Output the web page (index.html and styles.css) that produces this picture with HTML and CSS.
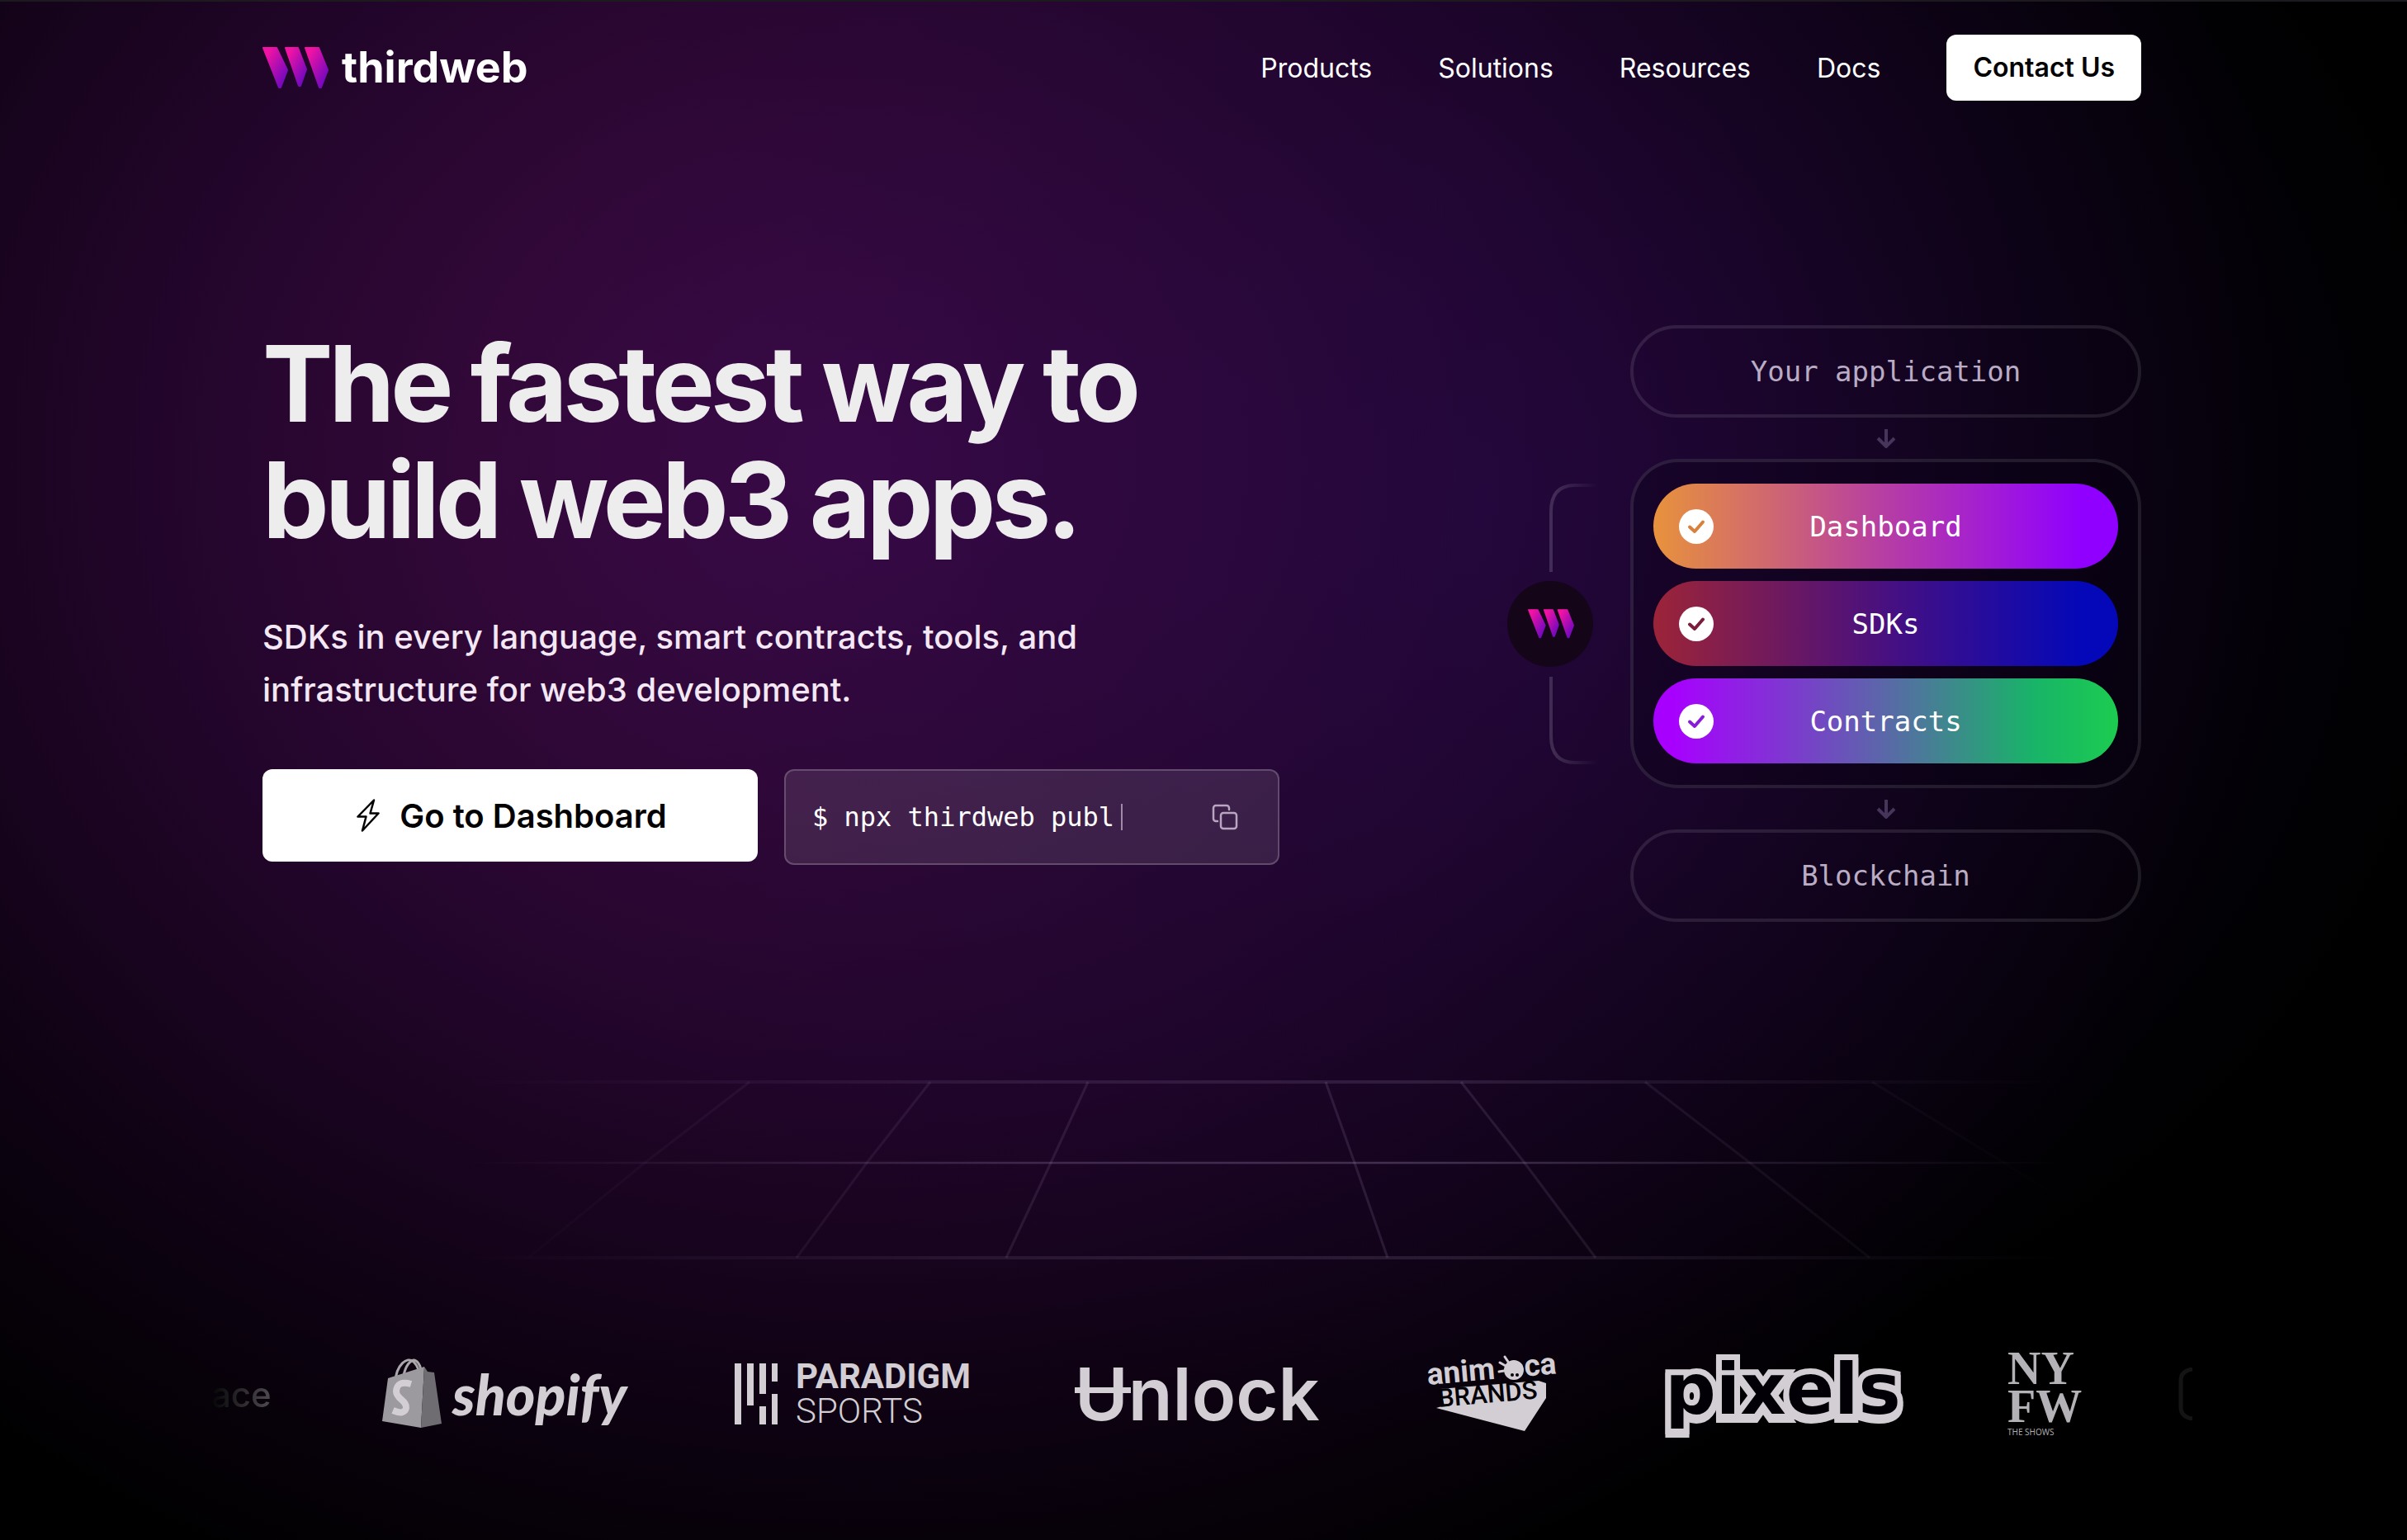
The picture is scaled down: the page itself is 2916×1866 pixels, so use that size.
FILE: index.html
```html
<!DOCTYPE html>
<html lang="en">
<head>
<meta charset="utf-8">
<title>thirdweb</title>
<link rel="stylesheet" href="styles.css">
</head>
<body>
<svg class="defs" aria-hidden="true">
  <defs>
    <linearGradient id="brand" x1="0" y1="0" x2="1" y2="1">
      <stop offset="0.15" stop-color="#f213a4"/>
      <stop offset="1" stop-color="#5a06c4"/>
    </linearGradient>
    <symbol id="mark" viewBox="0 0 80 51">
      <g fill="url(#brand)" stroke="url(#brand)" stroke-width="2" stroke-linejoin="round">
        <path d="M1 1H17L30 28L22 49H20Z"/>
        <path d="M28 1H43L53 27L46 47H44Z"/>
        <path d="M52 1H68L79 28L71 49H69Z"/>
      </g>
    </symbol>
    <symbol id="down" viewBox="0 0 24 24">
      <path d="M12 1V22M2 12L12 22L22 12" fill="none" stroke="currentColor" stroke-width="4"/>
    </symbol>
    <symbol id="check" viewBox="0 0 42 42">
      <circle cx="21" cy="21" r="21" fill="#fff"/>
      <path d="M13 21.500L19 27L29 15.500" fill="none" stroke="currentColor" stroke-width="4" stroke-linecap="round" stroke-linejoin="round"/>
    </symbol>
  </defs>
</svg>

<div class="page">
  <header class="header">
    <a class="brand" href="#">
      <svg class="brand-mark" aria-hidden="true"><use href="#mark"/></svg>
      <span>thirdweb</span>
    </a>
    <nav class="nav">
      <a href="#">Products</a>
      <a href="#">Solutions</a>
      <a href="#">Resources</a>
      <a href="#">Docs</a>
      <a class="contact" href="#">Contact Us</a>
    </nav>
  </header>

  <main>
    <section class="hero">
      <div class="pitch">
        <h1>The fastest way to<br>build web3 apps.</h1>
        <p>SDKs in every language, smart contracts, tools, and<br>infrastructure for web3 development.</p>
        <div class="actions">
          <a class="dashboard" href="#">
            <svg class="bolt" viewBox="0 0 28 40" aria-hidden="true"><path d="M21 1.500L1.500 21.500H11.500L7 38.500L26.500 17.500H16.500Z" fill="none" stroke="#000" stroke-width="2.500" stroke-linejoin="round"/></svg>
            Go to Dashboard
          </a>
          <div class="command">
            <code>$ npx thirdweb publ</code><span class="caret"></span>
            <button class="copy" type="button" aria-label="Copy command">
              <svg viewBox="0 0 32 32" aria-hidden="true"><g fill="none" stroke="currentColor" stroke-width="2.500" stroke-linejoin="round"><rect x="11" y="11" width="19" height="19" rx="3"/><path d="M7 21H5A3 3 0 0 1 2 18V5A3 3 0 0 1 5 2H18A3 3 0 0 1 21 5V7" stroke-linecap="round"/></g></svg>
            </button>
          </div>
        </div>
      </div>

      <div class="diagram">
        <svg class="bracket" viewBox="0 0 110 340" aria-hidden="true">
          <defs>
            <linearGradient id="fade" gradientUnits="userSpaceOnUse" x1="52" y1="0" x2="110" y2="0">
              <stop offset="0.1" stop-color="#fff" stop-opacity="0.15"/>
              <stop offset="1" stop-color="#fff" stop-opacity="0"/>
            </linearGradient>
          </defs>
          <path d="M53 107V34Q53 2 82 2H110M53 234V306Q53 338 82 338H110" fill="none" stroke="url(#fade)" stroke-width="4"/>
          <circle cx="52" cy="170" r="52" fill="#150518"/>
          <use href="#mark" x="25" y="152" width="56" height="36"/>
        </svg>
        <div class="stack">
          <div class="node">Your application</div>
          <svg class="down" aria-hidden="true"><use href="#down"/></svg>
          <ul class="layers">
            <li class="layer layer-dashboard"><svg aria-hidden="true"><use href="#check"/></svg>Dashboard</li>
            <li class="layer layer-sdks"><svg aria-hidden="true"><use href="#check"/></svg>SDKs</li>
            <li class="layer layer-contracts"><svg aria-hidden="true"><use href="#check"/></svg>Contracts</li>
          </ul>
          <svg class="down" aria-hidden="true"><use href="#down"/></svg>
          <div class="node">Blockchain</div>
        </div>
      </div>
    </section>

    <svg class="floor" viewBox="0 0 2916 220" aria-hidden="true">
      <defs>
        <linearGradient id="floor-line" gradientUnits="userSpaceOnUse" x1="560" y1="0" x2="2500" y2="0">
          <stop offset="0" stop-color="#b8a0d0" stop-opacity="0"/>
          <stop offset="0.35" stop-color="#b8a0d0" stop-opacity="0.12"/>
          <stop offset="0.6" stop-color="#b8a0d0" stop-opacity="0.15"/>
          <stop offset="1" stop-color="#b8a0d0" stop-opacity="0"/>
        </linearGradient>
      </defs>
      <g fill="none" stroke="url(#floor-line)" stroke-width="3">
        <path d="M540 4L2520 4.010M540 217L2520 217.010" stroke-width="4"/>
        <path d="M540 102L2520 102.010" stroke-width="3"/>
        <path d="M540 102L2520 102.010" stroke-width="2"/>
        <path d="M908 4L781 102L640 217M1127 4L1050 102L965 217M1318 4L1273 102L1219 217M1606 4L1641 102L1681 217M1770 4L1847 102L1933 217M1993 4L2120 102L2265 217M2268 4L2428 102L2520 160"/>
      </g>
    </svg>

    <section class="partners" aria-label="Partners">
      <span class="partner partner-ace">ace</span>

      <span class="partner partner-shopify">
        <svg class="bag" viewBox="0 0 74 86" aria-hidden="true">
          <path d="M17 28C18 8 31 -3 39 4C45 10 46 18 46 22M26 26C28 12 33 4 39 2C43 2 48 8 48 16" fill="none" stroke="#a9a7ab" stroke-width="3"/>
          <path d="M8 24L52 10L48 84L1 76Z" fill="#9c9a9e"/>
          <path d="M52 10L56 16L64 17L73 79L48 84Z" fill="#6f6d72"/>
          <path d="M36 31Q19 26 18 40C18 49 31 51 30 60Q28 69 14 63" fill="none" stroke="#d2ced4" stroke-width="8"/>
        </svg>
        <span>shopify</span>
      </span>

      <span class="partner partner-paradigm">
        <svg viewBox="0 0 54 74" aria-hidden="true"><path d="M0 0H8V74H0ZM15 0H23V51H15ZM30 0H38V37H30ZM30 52H38V74H30ZM45 0H52V22H45ZM45 37H52V74H45Z" fill="#d2ced4"/></svg>
        <span><b>PARADIGM</b><i>SPORTS</i></span>
      </span>

      <span class="partner partner-unlock">Unlock</span>

      <svg class="partner partner-animoca" viewBox="0 0 162 100" role="img" aria-label="animoca brands">
        <path d="M18 44L138 34L147 37V55L121 95L14 67L24 64Z" fill="#d2ced4"/>
        <g font-family="Roboto, sans-serif" font-weight="700">
          <g transform="rotate(-5 4 41)" font-size="37" fill="#d2ced4">
            <text x="4" y="39">anim</text>
            <text x="122" y="39">ca</text>
          </g>
          <text transform="rotate(-5 17 66)" x="17" y="66" font-size="31" font-weight="500" fill="#040106">BRANDS</text>
        </g>
        <ellipse cx="108" cy="21" rx="12" ry="12" fill="#d2ced4"/>
        <path d="M98 16L91 12M101 11L97 5M96 22L90 23" stroke="#d2ced4" stroke-width="3" stroke-linecap="round"/>
        <circle cx="106" cy="27" r="2" fill="#040106"/>
        <circle cx="112" cy="27" r="2" fill="#040106"/>
      </svg>

      <span class="partner partner-pixels">pixels</span>

      <span class="partner partner-nyfw"><span>NY</span><span>FW</span><small>THE SHOWS</small></span>

      <svg class="partner partner-next" viewBox="0 0 20 64" aria-hidden="true"><path d="M18 2Q4 4 4 16V48Q4 60 18 62" fill="none" stroke="#fff" stroke-opacity="0.08" stroke-width="5"/></svg>
    </section>
  </main>
</div>
</body>
</html>
```
FILE: styles.css
```css
* {
  box-sizing: border-box;
}

body {
  margin: 0;
  background: #000;
  color: #fff;
  font-family: Inter, "Open Sans", sans-serif;
}

a {
  color: inherit;
  text-decoration: none;
}

.defs {
  position: absolute;
  width: 0;
  height: 0;
}

.page {
  min-height: 100vh;
  padding-bottom: 96px;
  overflow: hidden;
  border-top: 2px solid #1c1a1e;
  background:
    radial-gradient(ellipse 42% 60% at 62% 33%, rgba(32, 8, 76, 0.45), rgba(22, 6, 56, 0.25) 50%, rgba(10, 0, 40, 0) 100%),
    radial-gradient(ellipse 60% 80% at 36% 30%, #400a4b 0%, #310838 28%, #22052a 50%, #0c0210 80%, #000 100%);
}

.header {
  display: flex;
  justify-content: space-between;
  align-items: center;
  padding: 40px 322px 0 318px;
}

.brand {
  display: flex;
  align-items: center;
  gap: 16px;
  font-size: 52px;
  font-weight: 700;
  line-height: 64px;
}

.brand-mark {
  width: 80px;
  height: 51px;
}

.nav {
  display: flex;
  align-items: center;
  gap: 80px;
  font-size: 32px;
}

.contact {
  padding: 0 32px;
  border-radius: 12px;
  background: #fff;
  color: #000;
  font-weight: 600;
  line-height: 80px;
}

.hero {
  display: flex;
  justify-content: space-between;
  padding: 272px 322px 0 318px;
}

.pitch h1 {
  margin: 0 0 64px;
  color: #ededed;
  font-size: 128px;
  font-weight: 700;
  line-height: 141px;
  letter-spacing: -5px;
}

.pitch p {
  margin: 0 0 64px;
  color: #f4e8f6;
  font-size: 40px;
  font-weight: 500;
  line-height: 64px;
}

.actions {
  display: grid;
  grid-template-columns: 600px 600px;
  align-items: start;
  gap: 32px;
}

.dashboard {
  display: flex;
  justify-content: center;
  align-items: center;
  gap: 24px;
  height: 112px;
  padding-left: 4px;
  border-radius: 12px;
  background: #fff;
  color: #000;
  font-size: 40px;
  font-weight: 600;
}

.bolt {
  width: 28px;
  height: 40px;
}

.command {
  display: flex;
  align-items: center;
  height: 116px;
  padding: 0 48px 0 32px;
  border: 2px solid rgba(255, 255, 255, 0.2);
  border-radius: 12px;
  background: rgba(255, 255, 255, 0.1);
}

.command code {
  font-family: "DejaVu Sans Mono", monospace;
  font-size: 32px;
}

.caret {
  width: 2px;
  height: 32px;
  margin-left: 8px;
  background: #a08aa8;
}

.copy {
  width: 32px;
  height: 32px;
  margin-left: auto;
  padding: 0;
  border: 0;
  background: none;
  color: #b9a5c0;
}

.copy svg {
  display: block;
}

.diagram {
  display: flex;
  align-items: center;
  gap: 39px;
}

.bracket {
  width: 110px;
  height: 340px;
}

.stack {
  display: flex;
  flex-direction: column;
  align-items: center;
  gap: 13px;
  width: 619px;
  font-family: "DejaVu Sans Mono", monospace;
  font-size: 34px;
}

.node {
  width: 100%;
  border: 4px solid rgba(255, 255, 255, 0.1);
  border-radius: 56px;
  color: #b9acc4;
  line-height: 104px;
  text-align: center;
}

.down {
  width: 24px;
  height: 24px;
  color: #47345a;
}

.layers {
  display: grid;
  gap: 15px;
  width: 100%;
  margin: 0;
  padding: 26px 24px;
  border: 4px solid rgba(255, 255, 255, 0.1);
  border-radius: 58px;
  background: rgba(8, 0, 16, 0.3);
  list-style: none;
}

.layer {
  display: grid;
  grid-template-columns: 42px 1fr 42px;
  align-items: center;
  height: 103px;
  padding: 0 31px;
  border-radius: 52px;
  color: #fff;
  text-align: center;
}

.layer svg {
  width: 42px;
  height: 42px;
}

.layer-dashboard {
  background: linear-gradient(90deg, #e8923c, #b840a0 48%, #9000ff 92%);
}

.layer-dashboard svg {
  color: #d8803c;
}

.layer-sdks {
  background: linear-gradient(90deg, #9c2438, #481080 50%, #0408b8 92%);
}

.layer-sdks svg {
  color: #7a1c3c;
}

.layer-contracts {
  background: linear-gradient(90deg, #a800ff 4%, #5a68a8 50%, #18b468 82%, #1ccc50);
}

.layer-contracts svg {
  color: #8a1cd8;
}

.floor {
  display: block;
  width: 100%;
  margin-top: 190px;
}

.partners {
  display: flex;
  align-items: center;
  gap: 120px;
  height: 120px;
  margin-top: 102px;
  padding-left: 250px;
  color: #d2ced4;
}

.partner {
  flex: none;
}

.partner-ace {
  width: 92px;
  padding-left: 6px;
  background: linear-gradient(90deg, #000, #4a464c 80%);
  background-clip: text;
  color: transparent;
  font-size: 42px;
  font-weight: 500;
}

.partner-shopify {
  display: flex;
  align-items: center;
  gap: 12px;
  width: 308px;
  font-family: Lato, sans-serif;
  font-size: 68px;
  font-style: italic;
  font-weight: 900;
  line-height: 80px;
}

.bag {
  flex: none;
  width: 74px;
  height: 86px;
}

.partner-paradigm {
  display: flex;
  align-items: center;
  gap: 20px;
  width: 292px;
  font-family: Roboto, sans-serif;
  font-size: 42px;
  line-height: 42px;
}

.partner-paradigm svg {
  width: 54px;
  height: 74px;
}

.partner-paradigm b,
.partner-paradigm i {
  display: block;
}

.partner-paradigm i {
  font-style: normal;
  font-weight: 300;
}

.partner-unlock {
  position: relative;
  width: 304px;
  font-size: 88px;
  font-weight: 600;
  line-height: 100px;
}

.partner-unlock::before {
  position: absolute;
  top: 42px;
  left: 0;
  width: 68px;
  height: 7px;
  background: #d2ced4;
  content: "";
}

.partner-animoca {
  width: 162px;
  height: 100px;
}

.partner-pixels {
  width: 304px;
  padding-bottom: 12px;
  color: #020006;
  font-family: "DejaVu Sans", sans-serif;
  font-size: 86px;
  font-weight: 700;
  line-height: 86px;
  text-align: center;
  -webkit-text-stroke: 14px #d2ced4;
  paint-order: stroke fill;
  filter: drop-shadow(0 4px 0 #d2ced4);
}

.partner-nyfw {
  width: 86px;
  color: #b4b2b6;
  font-family: "Liberation Serif", serif;
  font-size: 56px;
  font-weight: 700;
  line-height: 46px;
}

.partner-nyfw span {
  display: block;
}

.partner-nyfw small {
  display: block;
  font-family: "Open Sans", sans-serif;
  font-size: 10px;
  font-weight: 400;
  line-height: 16px;
}

.partner-next {
  width: 20px;
  height: 64px;
}
```
